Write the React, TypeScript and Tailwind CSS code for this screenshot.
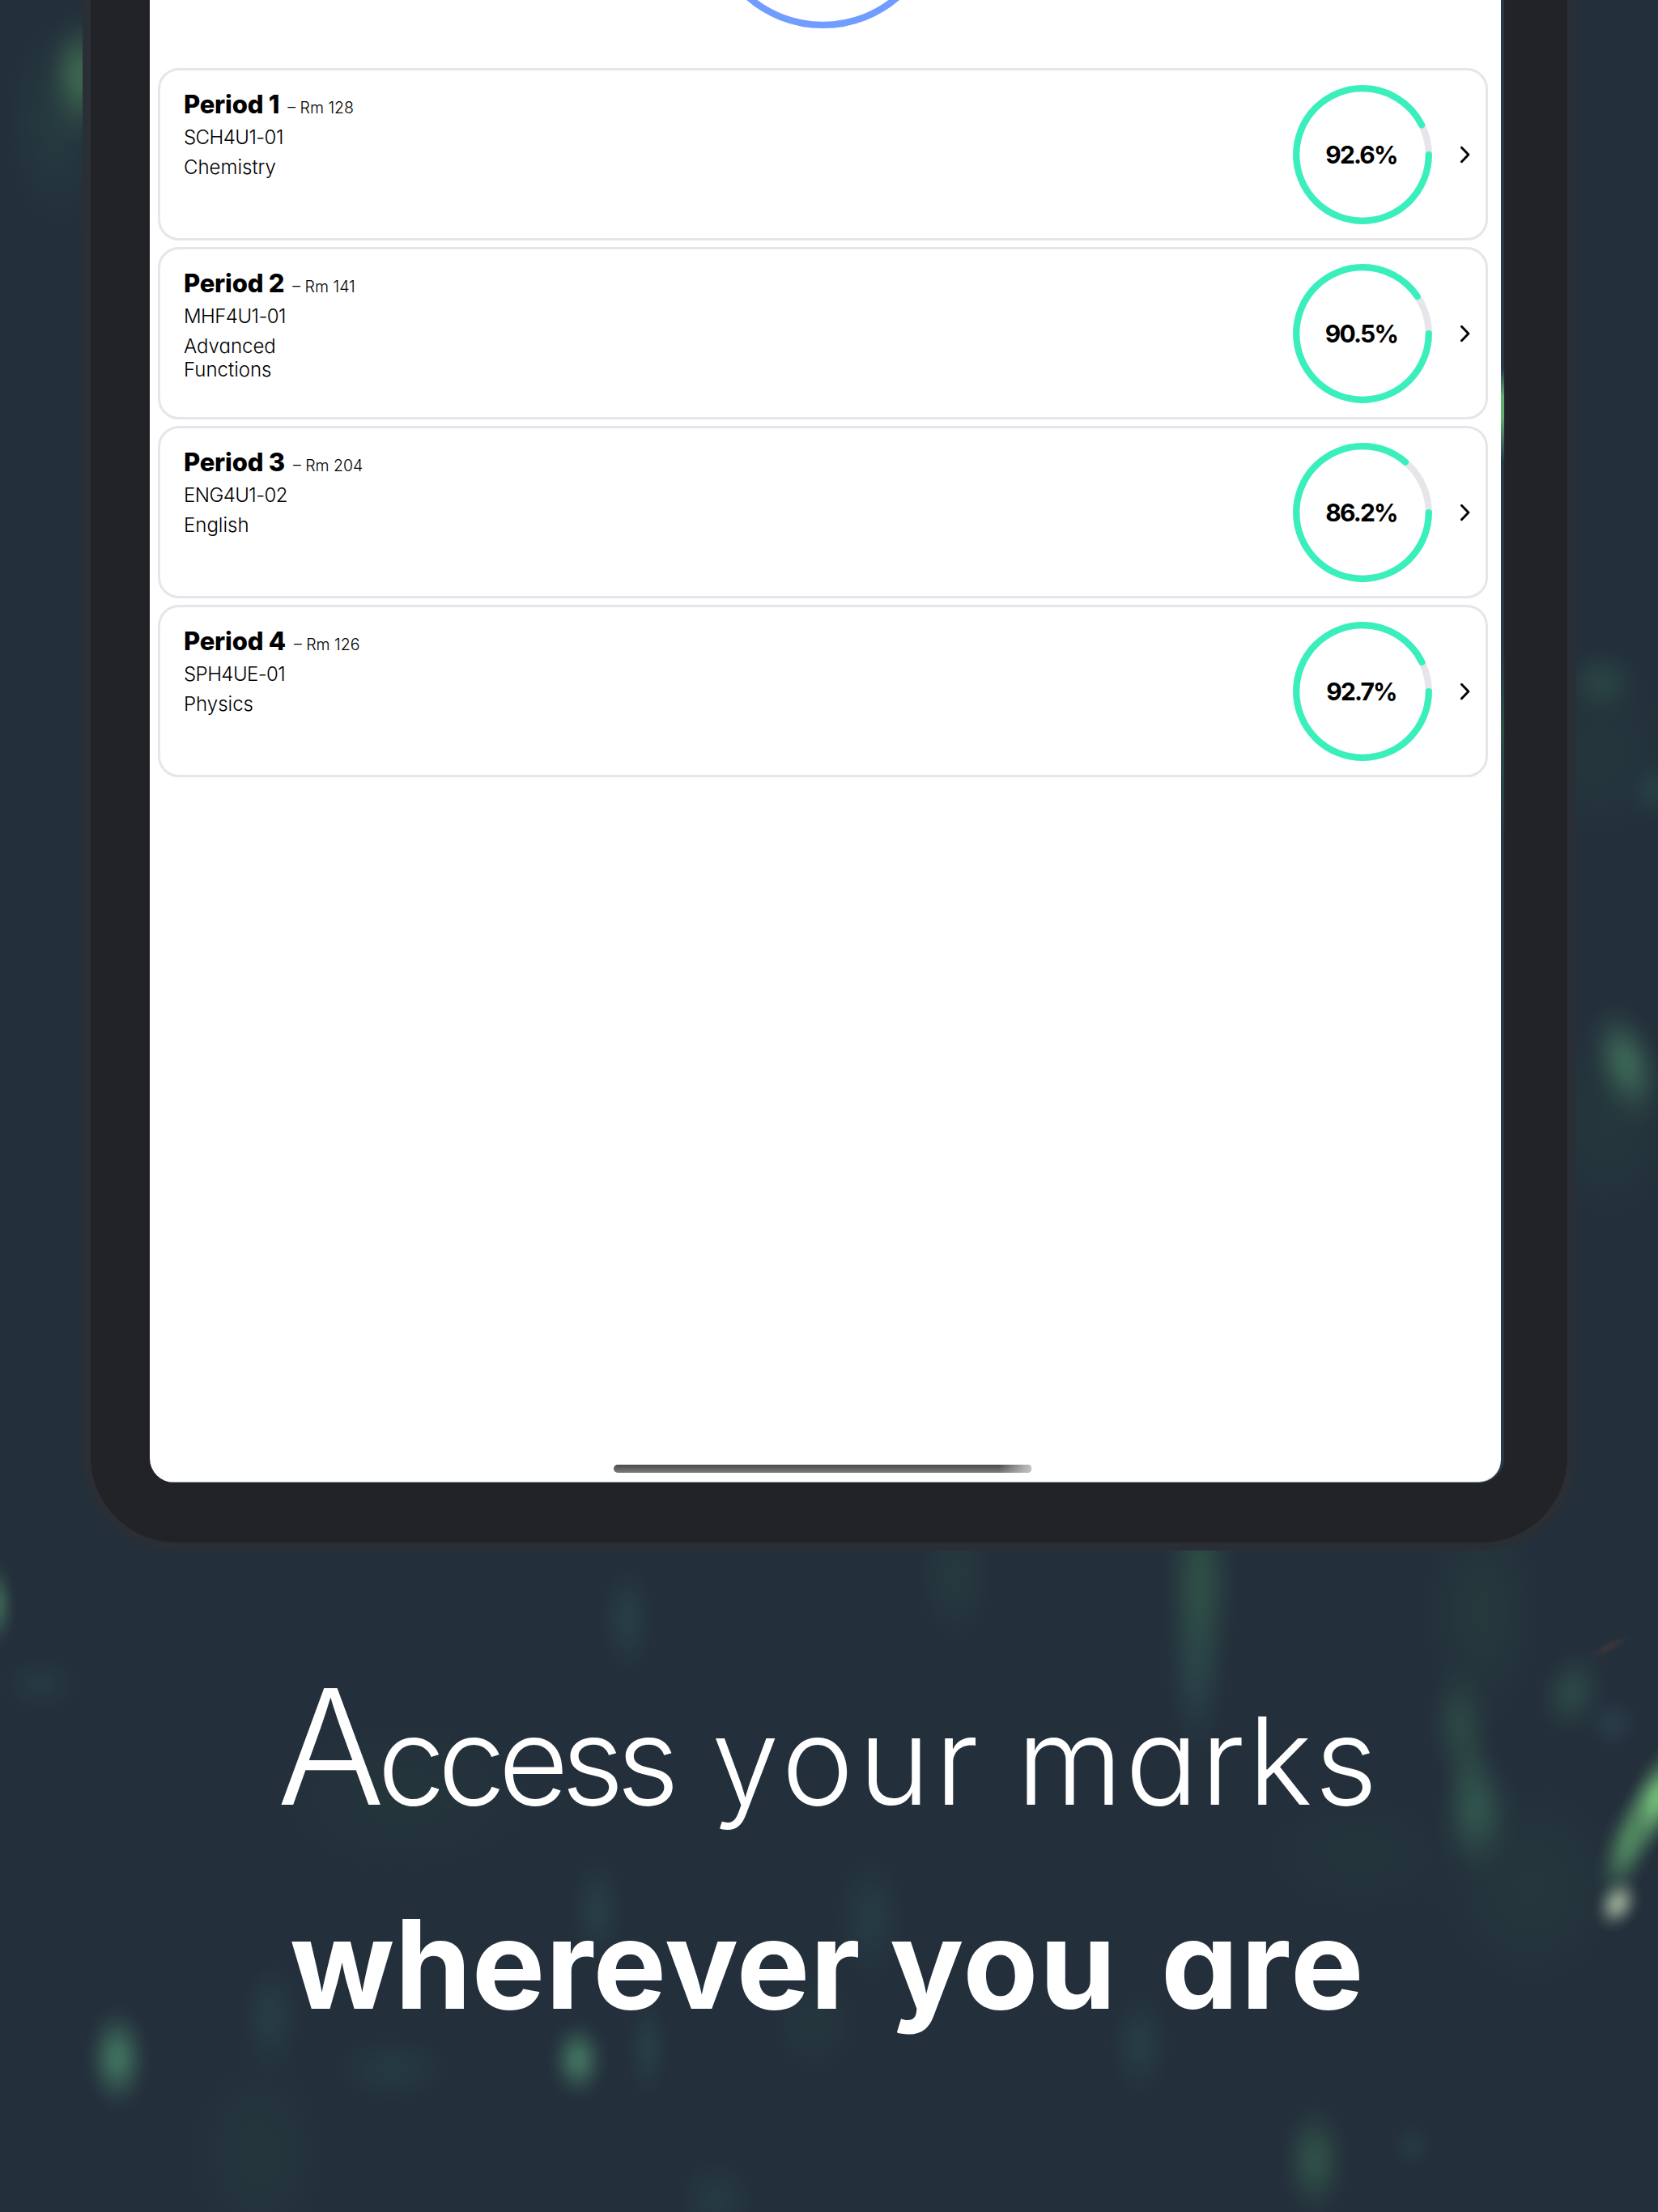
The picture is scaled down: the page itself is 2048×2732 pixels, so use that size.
type Course = {
  period: string;
  room: string;
  code: string;
  name: string;
  mark: number;
};

const courses: Course[] = [
  { period: "Period 1", room: "Rm 128", code: "SCH4U1-01", name: "Chemistry", mark: 92.6 },
  { period: "Period 2", room: "Rm 141", code: "MHF4U1-01", name: "Advanced Functions", mark: 90.5 },
  { period: "Period 3", room: "Rm 204", code: "ENG4U1-02", name: "English", mark: 86.2 },
  { period: "Period 4", room: "Rm 126", code: "SPH4UE-01", name: "Physics", mark: 92.7 },
];

type Glow = { x: number; y: number; rx: number; ry: number; color: string; opacity: number; tilt?: number };

const glows: Glow[] = [
  { x: 100, y: 95, rx: 50, ry: 85, color: "#4a8059", opacity: 0.7 },
  { x: 70, y: 150, rx: 80, ry: 160, color: "#2c5248", opacity: 0.3 },
  { x: 1978, y: 843, rx: 55, ry: 50, color: "#33604f", opacity: 0.38 },
  { x: 2044, y: 975, rx: 40, ry: 45, color: "#2c5354", opacity: 0.4 },
  { x: 1975, y: 930, rx: 110, ry: 140, color: "#28473f", opacity: 0.3 },
  { x: 2008, y: 1315, rx: 48, ry: 82, color: "#4a8266", opacity: 0.7, tilt: -16 },
  { x: 1985, y: 1380, rx: 110, ry: 160, color: "#28473f", opacity: 0.35 },
  { x: 1482, y: 1955, rx: 52, ry: 150, color: "#3a6d4f", opacity: 0.5 },
  { x: 1478, y: 2065, rx: 46, ry: 120, color: "#33605a", opacity: 0.34 },
  { x: 1180, y: 1945, rx: 60, ry: 100, color: "#2e5648", opacity: 0.26 },
  { x: 775, y: 2000, rx: 42, ry: 80, color: "#30605a", opacity: 0.28 },
  { x: -2, y: 1982, rx: 24, ry: 60, color: "#4a8062", opacity: 0.6 },
  { x: 50, y: 2080, rx: 60, ry: 45, color: "#2c5252", opacity: 0.25 },
  { x: 1830, y: 1990, rx: 90, ry: 180, color: "#2c4f40", opacity: 0.3 },
  { x: 1803, y: 2130, rx: 46, ry: 85, color: "#38684f", opacity: 0.38 },
  { x: 1816, y: 2190, rx: 40, ry: 80, color: "#38684f", opacity: 0.26 },
  { x: 1824, y: 2240, rx: 54, ry: 88, color: "#3c715c", opacity: 0.52 },
  { x: 1942, y: 2090, rx: 48, ry: 64, color: "#3a6a55", opacity: 0.38, tilt: 18 },
  { x: 1992, y: 2128, rx: 40, ry: 40, color: "#38606a", opacity: 0.24 },
  { x: 1988, y: 2034, rx: 34, ry: 9, color: "#5a4038", opacity: 0.4, tilt: -28 },
  { x: 1890, y: 2330, rx: 140, ry: 160, color: "#28473f", opacity: 0.35 },
  { x: 738, y: 2360, rx: 42, ry: 80, color: "#30605a", opacity: 0.28 },
  { x: 1075, y: 2370, rx: 56, ry: 95, color: "#2c5855", opacity: 0.28 },
  { x: 335, y: 2490, rx: 46, ry: 80, color: "#2e5c54", opacity: 0.3 },
  { x: 145, y: 2542, rx: 44, ry: 70, color: "#4c8a6c", opacity: 0.7 },
  { x: 714, y: 2544, rx: 40, ry: 54, color: "#4c8a6c", opacity: 0.7 },
  { x: 800, y: 2530, rx: 34, ry: 75, color: "#2f5c56", opacity: 0.3 },
  { x: 485, y: 2555, rx: 90, ry: 52, color: "#2a5452", opacity: 0.28 },
  { x: 1408, y: 2525, rx: 48, ry: 80, color: "#2c5a58", opacity: 0.3 },
  { x: 1005, y: 2500, rx: 70, ry: 80, color: "#2a4c44", opacity: 0.25 },
  { x: 1624, y: 2668, rx: 48, ry: 80, color: "#3c7254", opacity: 0.48 },
  { x: 1745, y: 2650, rx: 34, ry: 36, color: "#2e5a50", opacity: 0.22 },
  { x: 885, y: 2715, rx: 60, ry: 60, color: "#2c5a50", opacity: 0.25 },
  { x: 320, y: 2660, rx: 110, ry: 160, color: "#284640", opacity: 0.3 },
  { x: 500, y: 2220, rx: 220, ry: 130, color: "#27423c", opacity: 0.3 },
  { x: 1680, y: 2290, rx: 160, ry: 100, color: "#27423c", opacity: 0.3 },
  { x: 2046, y: 2222, rx: 38, ry: 82, color: "#72ba78", opacity: 1, tilt: 24 },
  { x: 2012, y: 2276, rx: 36, ry: 84, color: "#5a9a68", opacity: 0.75, tilt: 20 },
  { x: 1998, y: 2351, rx: 30, ry: 38, color: "#9db098", opacity: 0.85, tilt: 28 },
];

function Backdrop() {
  return (
    <svg className="absolute inset-0 h-full w-full" viewBox="0 0 2048 2732" aria-hidden="true">
      <defs>
        {glows.map((g, i) => (
          <radialGradient key={i} id={`glow${i}`}>
            <stop offset="0" stopColor={g.color} stopOpacity={g.opacity} />
            <stop offset="0.2" stopColor={g.color} stopOpacity={g.opacity * 0.89} />
            <stop offset="0.4" stopColor={g.color} stopOpacity={g.opacity * 0.6} />
            <stop offset="0.6" stopColor={g.color} stopOpacity={g.opacity * 0.3} />
            <stop offset="0.8" stopColor={g.color} stopOpacity={g.opacity * 0.09} />
            <stop offset="1" stopColor={g.color} stopOpacity="0" />
          </radialGradient>
        ))}
      </defs>
      {glows.map((g, i) => (
        <ellipse
          key={i}
          cx={g.x}
          cy={g.y}
          rx={g.rx}
          ry={g.ry}
          fill={`url(#glow${i})`}
          transform={`rotate(${g.tilt ?? 0} ${g.x} ${g.y})`}
        />
      ))}
    </svg>
  );
}

function MarkRing({ mark }: { mark: number }) {
  return (
    <div className="relative grid size-[172px] place-items-center">
      <svg className="absolute inset-0" width="172" height="172" viewBox="0 0 172 172" fill="none" strokeWidth="8.2">
        <circle cx="86" cy="86" r="81.8" stroke="#e5e5ea" />
        <circle
          cx="86"
          cy="86"
          r="81.8"
          stroke="#39f0bd"
          strokeLinecap="round"
          pathLength="100"
          strokeDasharray={`${mark} 100`}
        />
      </svg>
      <span className="pr-[3px] text-[30px] leading-none font-bold tracking-[-1.8px]">{mark.toFixed(1)}%</span>
    </div>
  );
}

function CourseCard({ course }: { course: Course }) {
  return (
    <div className="flex h-[213px] items-center rounded-[26px] border-[3px] border-[#e5e5eb] pr-[15px] pl-[29px]">
      <div className="flex h-full flex-col pt-[25px]">
        <div className="flex h-[34px] items-baseline gap-[10px] leading-[34px]">
          <span className="text-[31px] font-extrabold tracking-[-0.2px]">{course.period}</span>
          <span className="text-[19.5px] font-light">– {course.room}</span>
        </div>
        <div className="mt-[6px] text-[24px] leading-[36px] font-light tracking-[-0.55px]">{course.code}</div>
        <div className="mt-[5px] w-[150px] text-[24px] leading-[28.7px] font-light">{course.name}</div>
      </div>
      <div className="ml-auto flex items-center gap-[31px]">
        <MarkRing mark={course.mark} />
        <svg width="20" height="28" viewBox="0 0 20 28" fill="none">
          <path
            d="M5.4 5.3L13.9 14L5.4 22.7"
            stroke="#000"
            strokeWidth="2.9"
            strokeLinecap="round"
            strokeLinejoin="round"
          />
        </svg>
      </div>
    </div>
  );
}

function Tablet() {
  return (
    <div className="relative ml-[102px] flex h-[1915px] w-[1844px] shrink-0 rounded-b-[114px] bg-[#2a2e35] px-[10px] pb-[10px]">
      <div className="flex w-full rounded-b-[106px] bg-[#222327] pr-[78px] pb-[74px] pl-[73px]">
        <div className="flex w-full overflow-hidden rounded-b-[30px] bg-[linear-gradient(to_bottom,#26384a_0px,#26384a_455px,#5fae70_490px,#5fae70_515px,#26384a_570px,#26384a_800px,#2c5048_900px,#26384a_1040px)]">
          <div className="flex w-[1669px] flex-col rounded-br-[28px] border-b border-[#a5b3b6] bg-white px-[10px]">
            <div className="flex h-[84px] shrink-0 justify-center overflow-hidden">
              <svg width="200" height="44" viewBox="0 0 200 44" fill="none">
                <circle cx="96.5" cy="-109.5" r="140.4" stroke="#709dff" strokeWidth="8.4" />
              </svg>
            </div>
            <div className="flex w-[1643px] flex-col gap-[8px]">
              {courses.map((c) => (
                <CourseCard key={c.code} course={c} />
              ))}
            </div>
            <div className="mt-auto mb-[11px] ml-[563px] h-[10px] w-[516px] overflow-hidden rounded-full bg-linear-to-b from-[#4a4a4a] to-[#7c7c7c]">
              <div className="ml-auto h-full w-[40px] bg-linear-to-r from-transparent to-[#c4c4c4]" />
            </div>
          </div>
        </div>
      </div>
    </div>
  );
}

export default function App() {
  return (
    <main className="relative flex h-[2732px] w-[2048px] flex-col overflow-hidden bg-[#232f3b] font-['Inter',sans-serif] text-black [font-feature-settings:'cv11']">
      <Backdrop />
      <Tablet />
      <h1 className="relative mt-[134px] flex flex-col text-white">
        <span className="flex h-[251px] items-baseline pl-[342px] text-[150px] leading-[252px] font-light whitespace-nowrap">
          <span className="w-[537px] tracking-[-9.2px]">
            <span className="text-[198px] leading-none">A</span>ccess
          </span>
          <span className="w-[377px] tracking-[6px]">your</span>
          <span className="tracking-[3px]">marks</span>
        </span>
        <span className="flex h-[252px] items-baseline pl-[358px] text-[152px] leading-[252px] font-bold whitespace-nowrap">
          <span className="w-[741px] tracking-[0.5px]">wherever</span>
          <span className="w-[335px] tracking-[1.5px]">you</span>
          <span className="tracking-[3px]">are</span>
        </span>
      </h1>
    </main>
  );
}
